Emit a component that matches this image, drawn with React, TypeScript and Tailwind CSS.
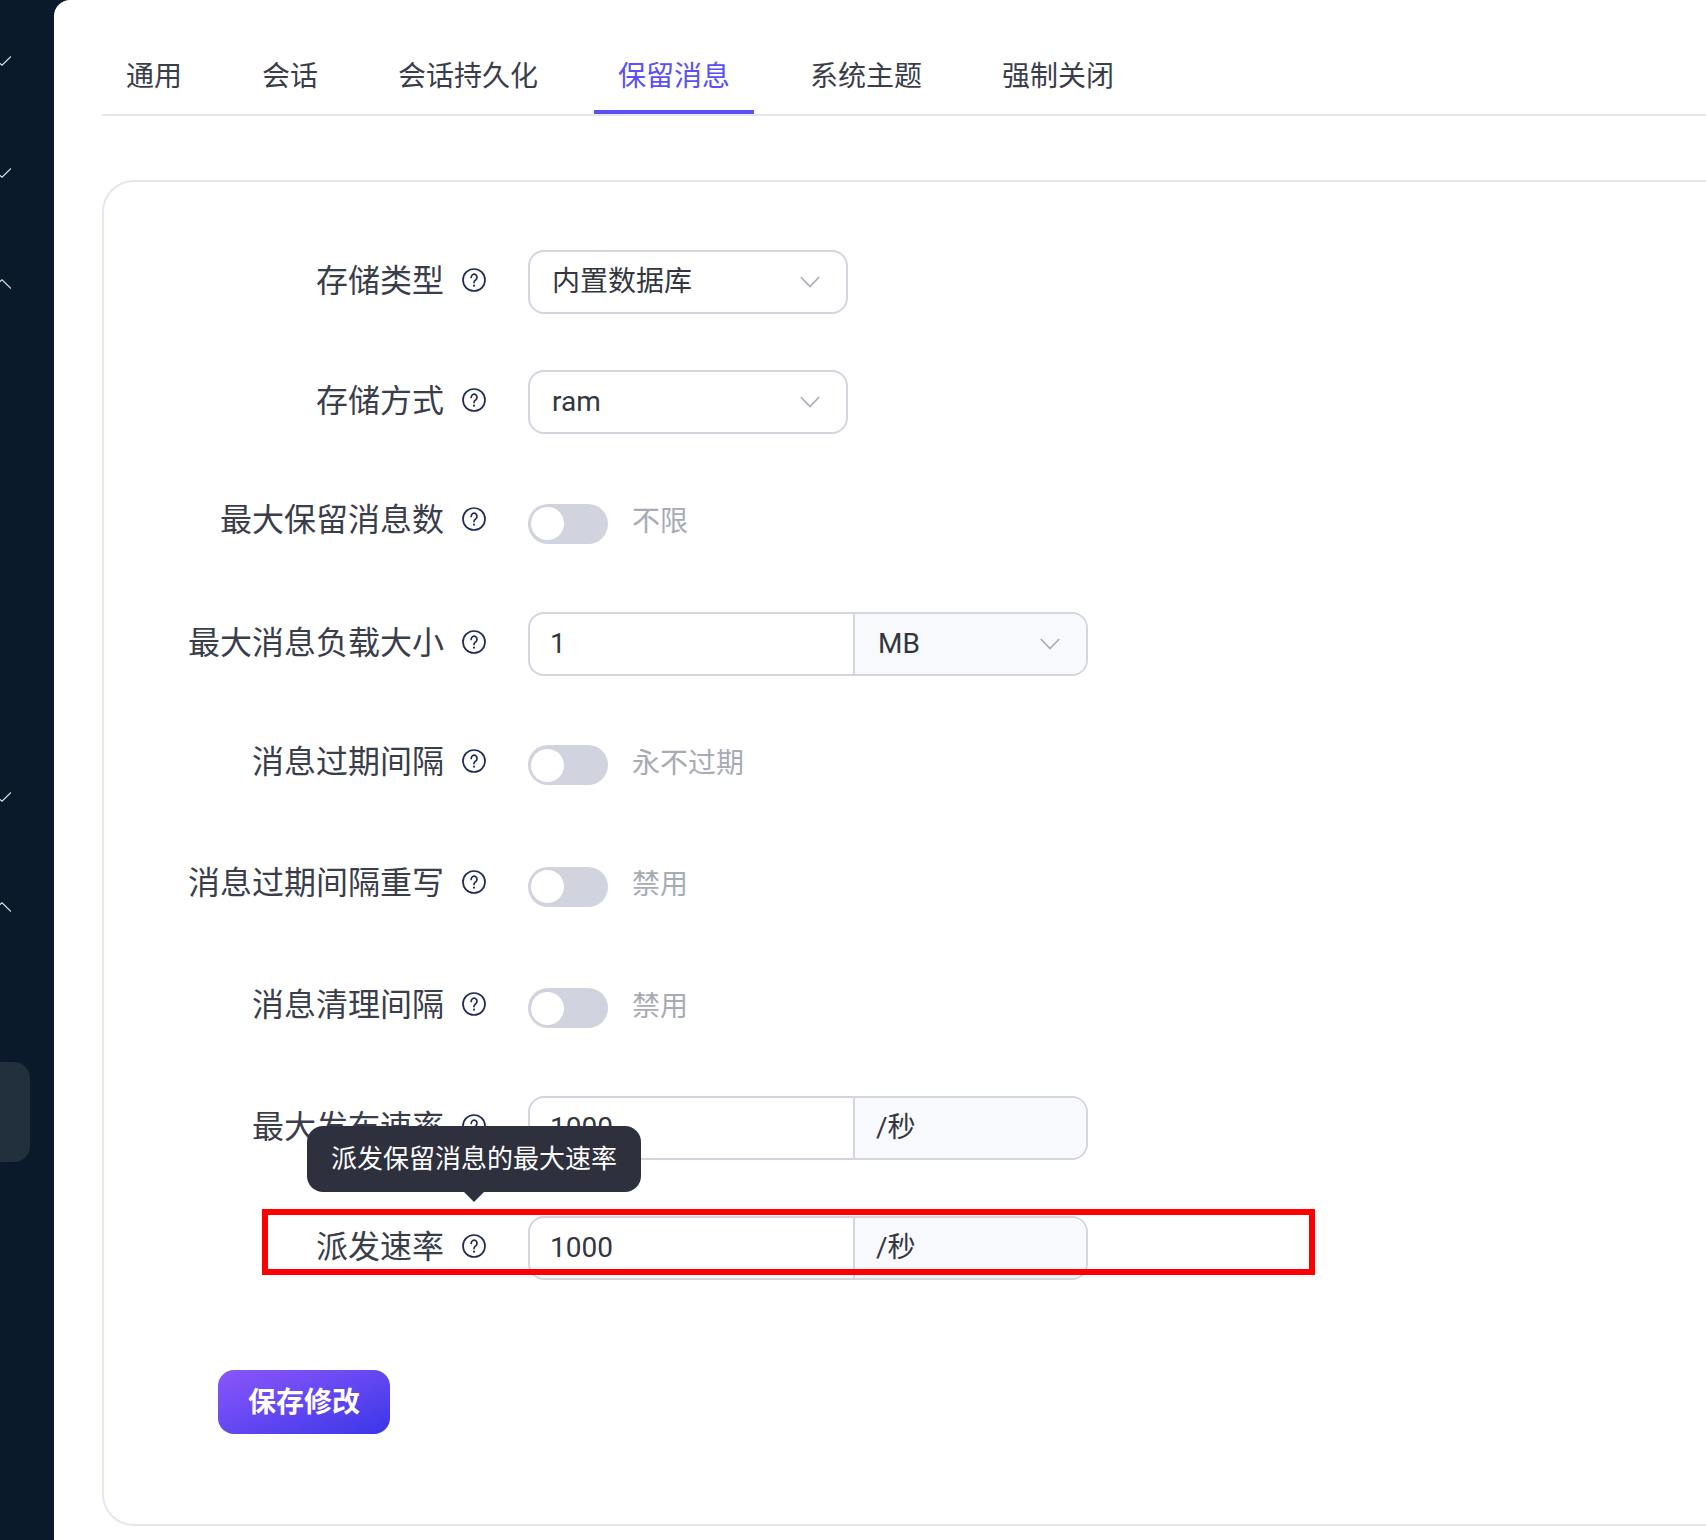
const FONT = 'font-["Roboto","Noto_Sans_CJK_SC",sans-serif]'

function HelpIcon() {
  return (
    <svg width="24" height="24" viewBox="0 0 24 24" fill="none" stroke="#1f2a55" strokeWidth="1.7" strokeLinecap="round" className="shrink-0">
      <circle cx="12" cy="12" r="11" />
      <path d="M9.2 9.4a2.9 3.2 0 1 1 4.4 2.7c-1 .6-1.6 1.2-1.6 2.5" />
      <path d="M12 17.6v.2" strokeWidth="2" />
    </svg>
  )
}

function Chevron() {
  return (
    <svg width="20" height="12" viewBox="0 0 20 12" fill="none" stroke="#a8abb5" strokeWidth="1.6" className="shrink-0">
      <path d="M.8 1 10 10.6 19.2 1" />
    </svg>
  )
}

// sidebar arrows are cut off by the window's left edge
function SideArrow({ up }: { up?: boolean }) {
  return (
    <svg width="22" height="10" viewBox="0 0 22 10" fill="none" stroke="#dfe3e8" strokeWidth="1.2" className="-ml-[11px]">
      <path d={up ? 'M3 9.5 13 .8 22 9.5' : 'M3 .5 13 9.2 22 .5'} />
    </svg>
  )
}

function Label({ text }: { text: string }) {
  return (
    <div className="flex w-[424px] shrink-0 items-center justify-end gap-[18px] pr-[42px] pb-[4px]">
      <span className="pt-[2px] text-[32px] leading-[44px] whitespace-nowrap text-[#3a3d4a]">{text}</span>
      <HelpIcon />
    </div>
  )
}

function SelectRow({ label, value }: { label: string; value: string }) {
  return (
    <div className="flex h-16">
      <Label text={label} />
      <div className="flex h-16 w-80 items-center justify-between rounded-2xl border-2 border-[#d3d5df] pr-[26px] pl-[22px] text-[28px] text-[#33363f]">
        <span>{value}</span>
        <Chevron />
      </div>
    </div>
  )
}

function SwitchRow({ label, hint }: { label: string; hint: string }) {
  return (
    <div className="flex h-[65.5px] items-center">
      <div className="mb-[3px]">
        <Label text={label} />
      </div>
      <div className="mt-[2px] flex h-10 w-20 items-center rounded-full bg-[#d1d3de] pl-[3px]">
        <div className="h-[33px] w-[33px] rounded-full bg-white" />
      </div>
      <span className="ml-[24px] pb-[1px] text-[28px] text-[#a8abb5]">{hint}</span>
    </div>
  )
}

function InputRow({ label, value, unit, chevron }: { label: string; value: string; unit: string; chevron?: boolean }) {
  return (
    <div className="flex h-16">
      <Label text={label} />
      <div className="flex h-16 w-[560px] overflow-hidden rounded-2xl border-2 border-[#d3d5df] text-[28px] text-[#33363f]">
        <div className="flex w-[325px] items-center border-r-2 border-[#d3d5df] pl-[20px]">{value}</div>
        <div className={`flex flex-1 items-center justify-between bg-[#f8f9fd] pr-[26px] ${chevron ? 'pl-[23px]' : 'pl-[21px]'}`}>
          <span>{unit}</span>
          {chevron && <Chevron />}
        </div>
      </div>
    </div>
  )
}

export default function App() {
  const tabs = ['通用', '会话', '会话持久化', '保留消息', '系统主题', '强制关闭']

  return (
    <div className={`flex h-[1540px] w-[1706px] overflow-hidden bg-[#0a1a2a] ${FONT}`}>
      {/* Sidebar - mostly scrolled out of the picture */}
      <div className="flex w-[54px] shrink-0 flex-col items-start pt-[56px]">
        <SideArrow />
        <div className="mt-[102px]"><SideArrow /></div>
        <div className="mt-[101px]"><SideArrow up /></div>
        <div className="mt-[503px]"><SideArrow /></div>
        <div className="mt-[100px]"><SideArrow up /></div>
        <div className="mt-[150px] h-[100px] w-[30px] rounded-r-2xl bg-[#222f3c]" />
      </div>

      <div className="min-w-0 flex-1 rounded-tl-2xl bg-white pt-9 pl-12">
        {/* Tabs */}
        <div className="flex h-[80px] w-[1700px] gap-8 border-b-2 border-[#e4e6f0]">
          {tabs.map((tab) => (
            <div
              key={tab}
              className={`h-[78px] border-b-4 px-6 pt-[20px] text-[28px] leading-[42px] whitespace-nowrap ${
                tab === '保留消息' ? 'border-[#5b4ff5] text-[#5b4ff5]' : 'border-transparent text-[#3a3d4a]'
              }`}
            >
              {tab}
            </div>
          ))}
        </div>

        {/* Card */}
        <div className="mt-16 flex h-[1346px] w-[1700px] flex-col gap-14 rounded-[32px] border-2 border-[#e4e6f0] pt-[68px]">
          <SelectRow label="存储类型" value="内置数据库" />
          <SelectRow label="存储方式" value="ram" />
          <SwitchRow label="最大保留消息数" hint="不限" />
          <InputRow label="最大消息负载大小" value="1" unit="MB" chevron />
          <SwitchRow label="消息过期间隔" hint="永不过期" />
          <SwitchRow label="消息过期间隔重写" hint="禁用" />
          <SwitchRow label="消息清理间隔" hint="禁用" />
          <InputRow label="最大发布速率" value="1000" unit="/秒" />

          <div className="relative">
            <InputRow label="派发速率" value="1000" unit="/秒" />
            {/* Tooltip over the row above */}
            <div className="absolute top-[-90px] left-[203px] flex h-[66px] w-[334px] items-center justify-center rounded-2xl bg-[#2e303d] text-[26px] whitespace-nowrap text-white">
              派发保留消息的最大速率
              <div className="absolute top-[64px] left-[155px] h-0 w-0 border-t-[12px] border-r-[12px] border-l-[12px] border-t-[#2e303d] border-r-transparent border-l-transparent" />
            </div>
            {/* Red highlight box */}
            <div className="absolute top-[-7px] left-[158px] h-[66px] w-[1053px] border-[6px] border-[#ff0000]" />
          </div>

          <button className="mt-[34px] ml-[114px] h-16 w-[172px] rounded-2xl bg-gradient-to-br from-[#8b55fb] to-[#3b35e8] pt-[2px] text-[28px] font-semibold text-white">
            保存修改
          </button>
        </div>
      </div>
    </div>
  )
}
